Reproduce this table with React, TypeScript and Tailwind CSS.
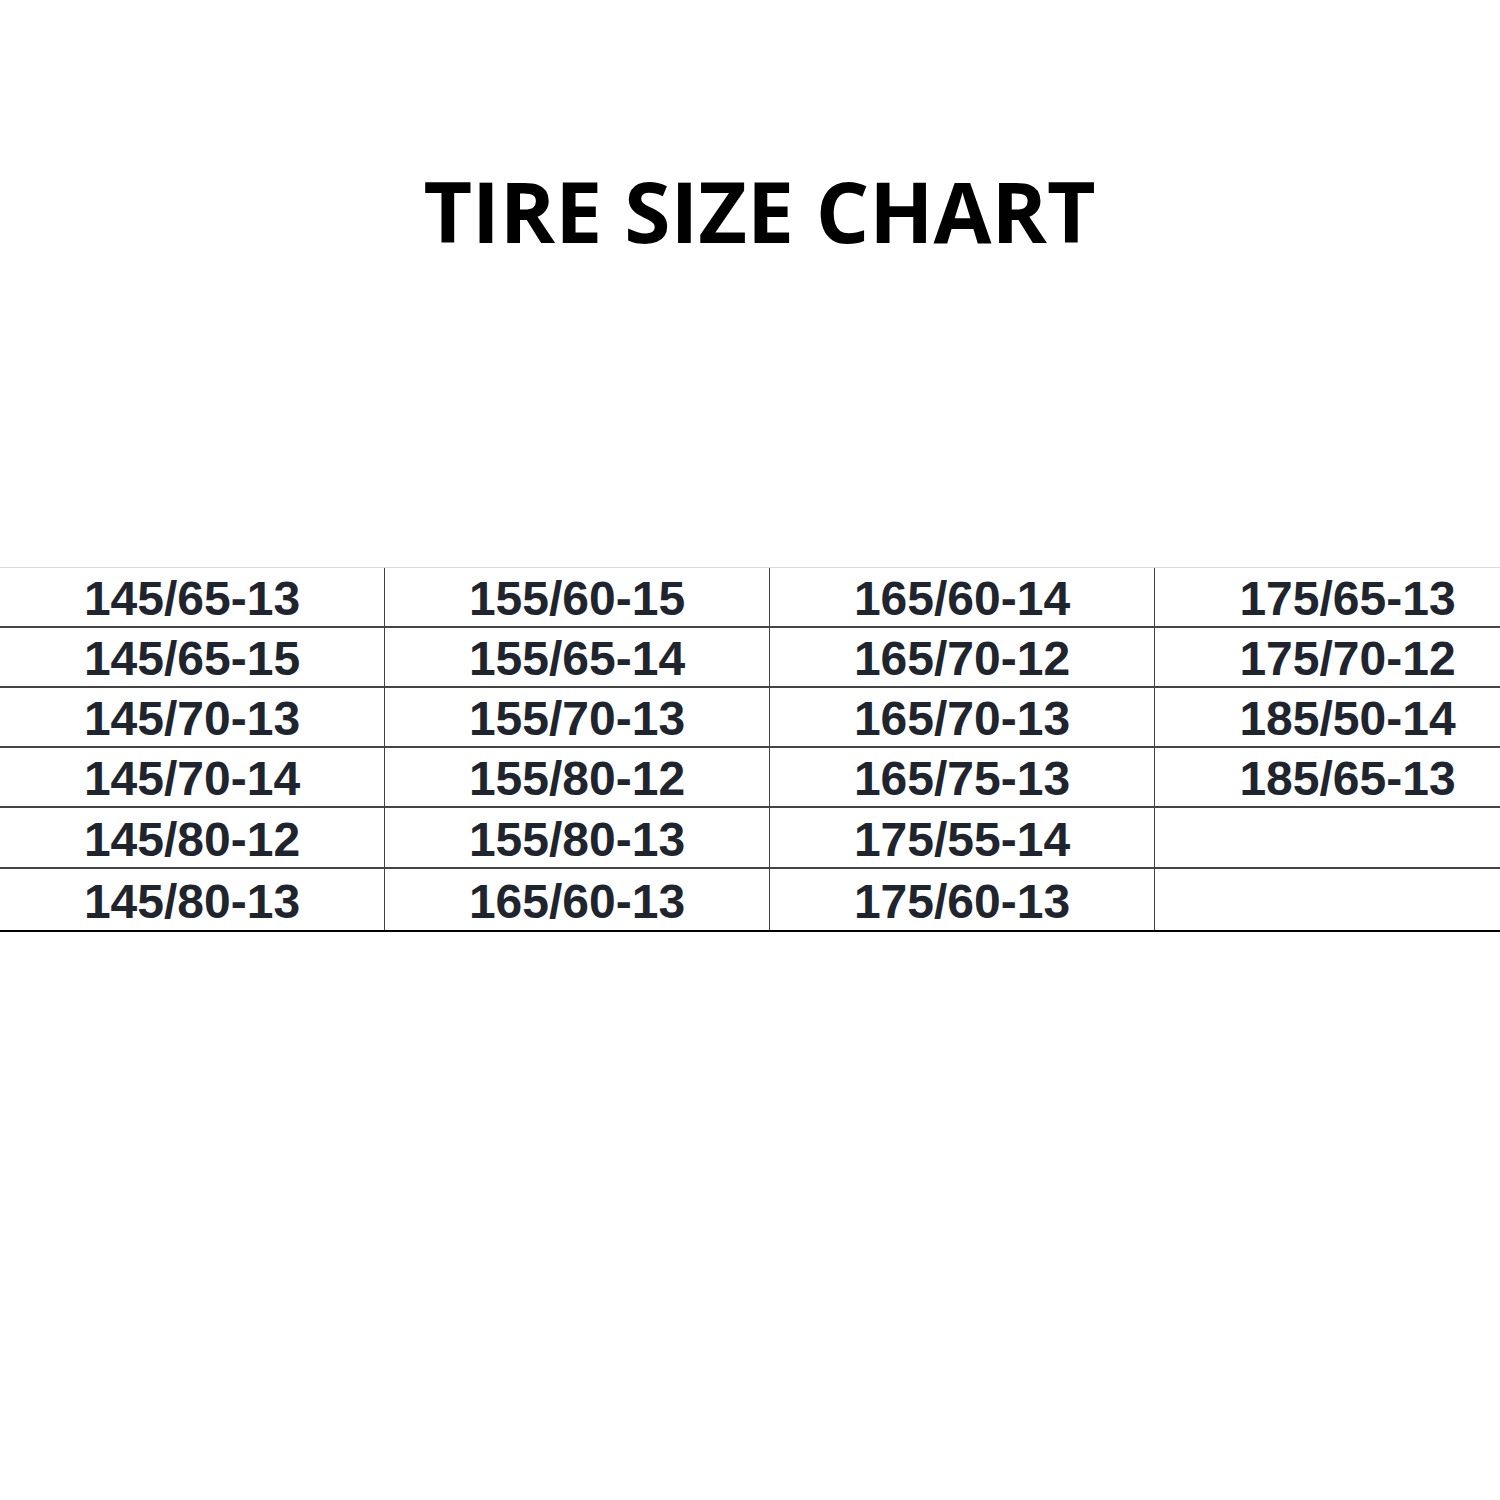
const rows = [
  ["145/65-13", "155/60-15", "165/60-14", "175/65-13"],
  ["145/65-15", "155/65-14", "165/70-12", "175/70-12"],
  ["145/70-13", "155/70-13", "165/70-13", "185/50-14"],
  ["145/70-14", "155/80-12", "165/75-13", "185/65-13"],
  ["145/80-12", "155/80-13", "175/55-14", ""],
  ["145/80-13", "165/60-13", "175/60-13", ""],
];

const heights = ["h-[60px]", "h-[60px]", "h-[60px]", "h-[60px]", "h-[61px]", "h-[61px]"];

export default function App() {
  return (
    <div className="w-[1500px] h-[1500px] bg-white overflow-hidden">
      <h1
        className="pt-[169px] pl-[19px] text-center text-[84px] leading-none font-bold text-black"
        style={{ fontFamily: '"Open Sans", sans-serif' }}
      >
        TIRE SIZE CHART
      </h1>

      <div className="mt-[314px] w-[1540px] border-t border-[#dcdcdc] border-b-2 border-b-black">
        {rows.map((row, i) => (
          <div
            key={i}
            className={`grid grid-cols-[385px_385px_385px_385px] ${heights[i]} ${
              i < rows.length - 1 ? "border-b-2 border-[#444]" : ""
            }`}
          >
            {row.map((size, j) => (
              <div
                key={j}
                className={`flex items-center justify-center pt-[4px] text-[48px] leading-none font-bold text-[#1f252e] ${
                  j < 3 ? "border-r border-[#444]" : ""
                }`}
                style={{ fontFamily: '"Liberation Sans", Arial, sans-serif' }}
              >
                {size}
              </div>
            ))}
          </div>
        ))}
      </div>
    </div>
  );
}
